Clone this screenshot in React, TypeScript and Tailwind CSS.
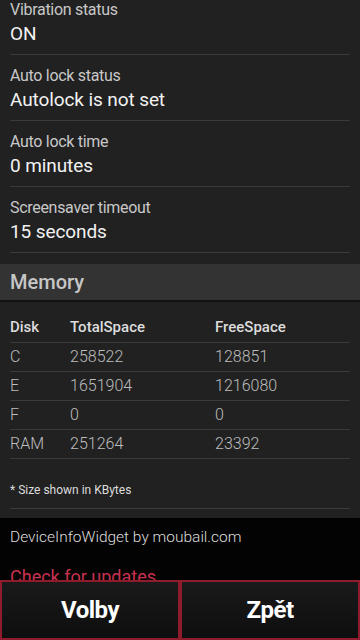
import React from "react";

const settings = [
  { label: "Vibration status", value: "ON" },
  { label: "Auto lock status", value: "Autolock is not set" },
  { label: "Auto lock time", value: "0 minutes" },
  { label: "Screensaver timeout", value: "15 seconds" },
];

const disks = [
  { disk: "C", total: "258522", free: "128851" },
  { disk: "E", total: "1651904", free: "1216080" },
  { disk: "F", total: "0", free: "0" },
  { disk: "RAM", total: "251264", free: "23392" },
];

const font = { fontFamily: "Roboto, sans-serif" };
const light = { fontFamily: "Roboto, sans-serif", fontWeight: 300 };

export default function App() {
  return (
    <div className="w-[360px] h-[640px] overflow-hidden bg-[#212121] flex flex-col relative" style={font}>
      <div className="flex-1 overflow-hidden">
        {/* list is scrolled a little, first row is cut at the top */}
        <div className="-mt-[11px]">
          {settings.map((s) => (
            <div key={s.label} className="mx-[10px] h-[66px] border-b border-[#3a3a3a] pt-[11px]">
              <div className="text-[16px] leading-[20px] tracking-[-0.3px] text-[#c8c8c8]">{s.label}</div>
              <div className="text-[19px] leading-[26px] tracking-[-0.1px] text-[#f2f2f2] mt-[1px]">{s.value}</div>
            </div>
          ))}
        </div>

        <div className="mt-[11px] h-[38px] bg-[#333333] border-b-2 border-[#121212] px-[10px] flex items-center">
          <span className="text-[20px] font-medium text-[#c6c6c6]">Memory</span>
        </div>

        <div className="mx-[10px]">
          <div className="grid grid-cols-[60px_145px_1fr] h-[41px] items-end pb-[4px] border-b border-[#3a3a3a] text-[15px] font-medium text-[#dcdcdc]">
            <span>Disk</span>
            <span>TotalSpace</span>
            <span>FreeSpace</span>
          </div>
          {disks.map((d) => (
            <div
              key={d.disk}
              className="grid grid-cols-[60px_145px_1fr] h-[29px] items-center border-b border-[#3a3a3a] text-[16px] text-[#bdbdbd]"
              style={light}
            >
              <span>{d.disk}</span>
              <span>{d.total}</span>
              <span>{d.free}</span>
            </div>
          ))}
          <div className="h-[50px] border-b border-[#3a3a3a] flex items-center pt-[13px] text-[12px] text-[#dcdcdc]">
            * Size shown in KBytes
          </div>
        </div>

        <div className="mt-[9px] bg-[#030303] h-[100px] px-[10px] pt-[8px]">
          <div className="text-[15.5px]" style={light}>
            <span className="text-[#dedede]">DeviceInfoWidget by moubail.com</span>
          </div>
          <div className="mt-[14px] text-[18px] text-[#c8324f]">Check for updates</div>
        </div>
      </div>

      <div className="absolute left-0 right-0 bottom-0 h-[60px] grid grid-cols-2 bg-[#0c0c0c]">
        <button className="border-2 border-[#8e1c2c] bg-gradient-to-b from-[#1a1a1a] to-[#0e0e0e] text-white text-[24px] tracking-[-0.5px] font-bold">
          Volby
        </button>
        <button className="border-2 border-[#8e1c2c] bg-gradient-to-b from-[#1a1a1a] to-[#0e0e0e] text-white text-[24px] tracking-[-0.5px] font-bold">
          Zpět
        </button>
      </div>
    </div>
  );
}
